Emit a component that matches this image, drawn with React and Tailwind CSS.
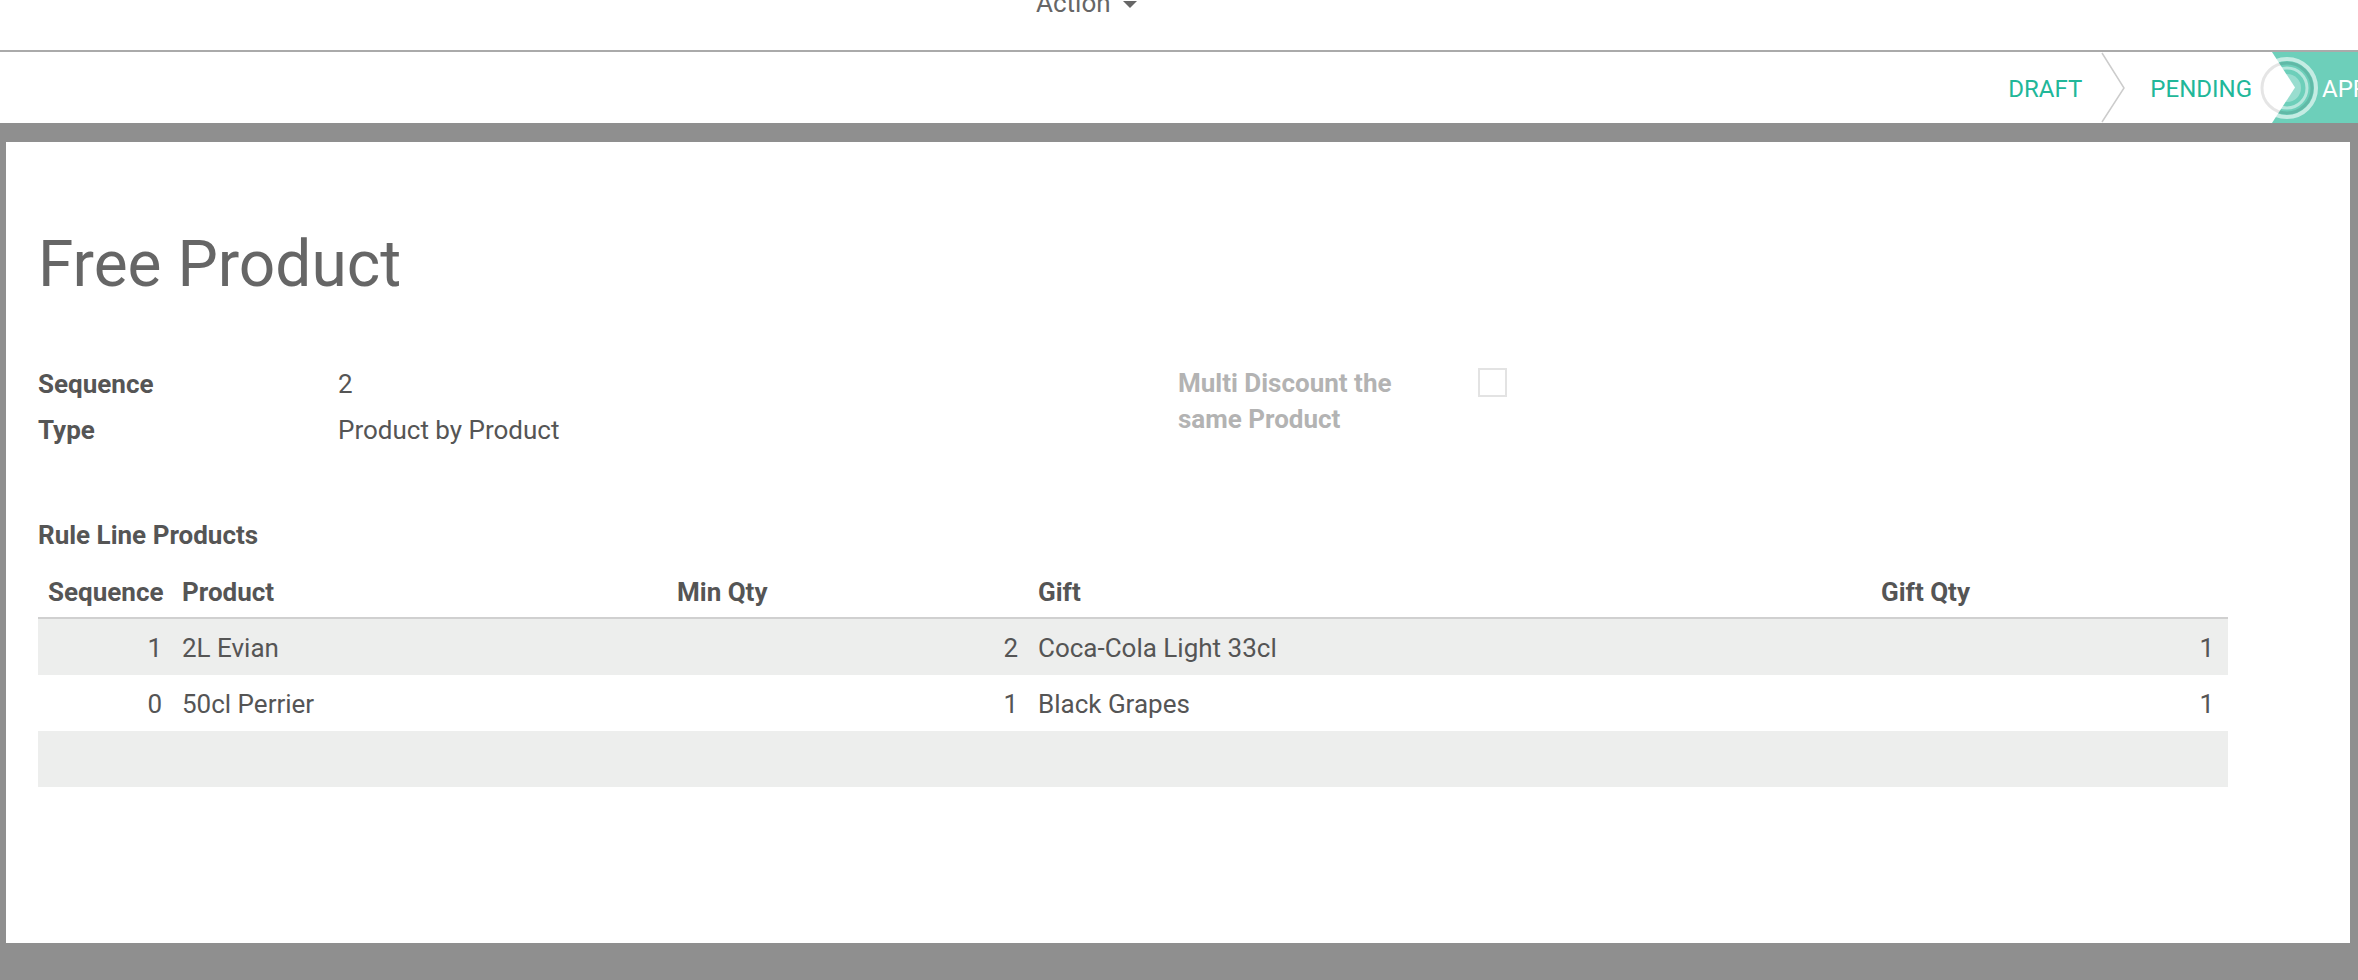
import React from "react";

const rows = [
  { seq: 1, product: "2L Evian", minQty: 2, gift: "Coca-Cola Light 33cl", giftQty: 1 },
  { seq: 0, product: "50cl Perrier", minQty: 1, gift: "Black Grapes", giftQty: 1 },
];

const cols = "grid grid-cols-[134px_495px_361px_843px_357px]";

const StatusBar = () => (
  <div className="flex h-[71px] justify-end overflow-hidden text-[24px] uppercase">
    <div className="flex items-center pr-[19px] pt-[3px] text-[#21b799]">Draft</div>
    <svg width="24" height="71" viewBox="0 0 24 71" className="shrink-0">
      <polyline points="1,1 23,36 1,70" fill="none" stroke="#cccccc" strokeWidth="1.5" />
    </svg>
    <div className="flex items-center pl-[25px] pr-[20px] pt-[3px] text-[#21b799]">Pending</div>
    <div className="relative flex w-[86px] shrink-0 items-center bg-[#6dcfba]">
      <svg width="24" height="71" viewBox="0 0 24 71" className="absolute left-0 top-0">
        <polygon points="0,0 23,35.5 0,71" fill="#ffffff" />
      </svg>
      {/* click ripple left on the active step */}
      <svg width="70" height="70" viewBox="0 0 70 70" className="absolute left-[-20px] top-[1px]">
        <circle cx="35" cy="35" r="29" fill="none" stroke="#ffffff" strokeOpacity="0.6" strokeWidth="4" />
        <circle cx="35" cy="35" r="25" fill="none" stroke="#000000" strokeOpacity="0.1" strokeWidth="3" />
        <circle cx="35" cy="35" r="20" fill="none" stroke="#ffffff" strokeOpacity="0.5" strokeWidth="3" />
        <circle cx="35" cy="35" r="14" fill="#ffffff" fillOpacity="0.3" />
      </svg>
      <span className="relative whitespace-nowrap pl-[50px] pt-[3px] text-white">Approved</span>
    </div>
  </div>
);

const App = () => {
  return (
    <div className="min-h-[980px] bg-[#8f8f8f] font-['Roboto','Liberation_Sans',sans-serif] text-[26px] text-[#555555]">
      <div className="bg-white">
        <div className="h-[50px] overflow-hidden">
          <div className="mt-[-15px] flex items-center pl-[1036px] leading-[36px] text-[#666666]">
            <span>Action</span>
            <span className="ml-[12px] mt-[2px] h-0 w-0 border-x-[7px] border-t-[7px] border-x-transparent border-t-[#666666]"></span>
          </div>
        </div>
        <div className="h-[2px] bg-[#aaaaaa]"></div>
        <StatusBar />
      </div>

      <div className="pb-[37px] pl-[6px] pr-[8px] pt-[19px]">
        <div className="h-[801px] bg-white px-[32px] pt-[84px]">
          <h1 className="text-[64px] leading-[77px] text-[#666666]">Free Product</h1>

          <div className="mt-[58px] grid grid-cols-[1140px_1140px]">
            <div className="grid grid-cols-[300px_1fr] leading-[46px]">
              <div className="font-bold">Sequence</div>
              <div>2</div>
              <div className="font-bold">Type</div>
              <div>Product by Product</div>
            </div>
            <div className="grid grid-cols-[300px_1fr]">
              <div className="pt-[4px] font-bold leading-[36px] text-[#b3b3b3]">
                Multi Discount the
                <br />
                same Product
              </div>
              <div>
                <div className="mt-[7px] h-[29px] w-[29px] border-2 border-[#e3e3e3] bg-white"></div>
              </div>
            </div>
          </div>

          <div className="mt-[64px] font-bold leading-[36px]">Rule Line Products</div>

          <div className="mt-[10px] w-[2190px] leading-[58px]">
            <div className={`${cols} h-[56px] border-b-2 border-[#d0d0d0] font-bold`}>
              <div className="px-[10px]">Sequence</div>
              <div className="px-[10px]">Product</div>
              <div className="px-[10px]">Min Qty</div>
              <div className="px-[10px]">Gift</div>
              <div className="px-[10px]">Gift Qty</div>
            </div>
            {rows.map((r, i) => (
              <div key={r.product} className={`${cols} h-[56px] ${i % 2 === 0 ? "bg-[#edeeed]" : "bg-white"}`}>
                <div className="px-[10px] text-right">{r.seq}</div>
                <div className="px-[10px]">{r.product}</div>
                <div className="px-[10px] text-right">{r.minQty}</div>
                <div className="px-[10px]">{r.gift}</div>
                <div className="pl-[10px] pr-[14px] text-right">{r.giftQty}</div>
              </div>
            ))}
            <div className="h-[56px] bg-[#edeeed]"></div>
          </div>
        </div>
      </div>
    </div>
  );
};

export default App;
